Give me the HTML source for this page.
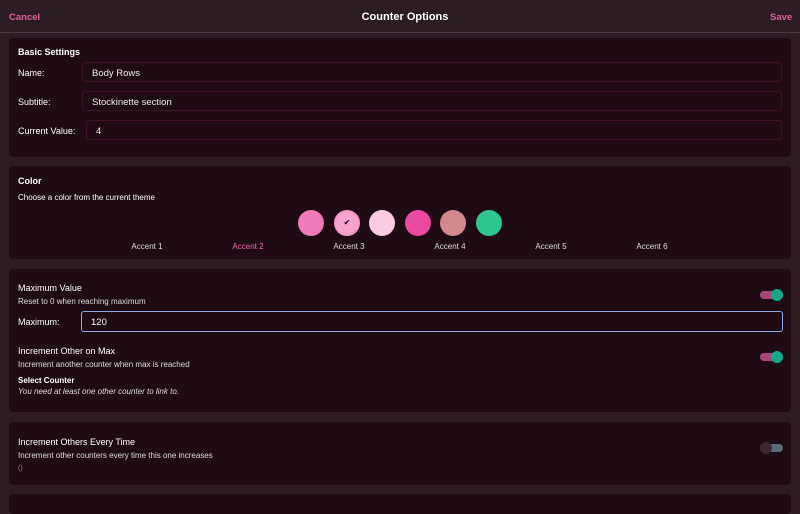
<!DOCTYPE html>
<html><head><style>
*{box-sizing:border-box;margin:0;padding:0}
body{width:800px;height:500px;overflow:hidden;background:#2b1d23;font-family:"Liberation Sans",sans-serif;color:#fff;position:relative}
.hdr{position:absolute;left:0;top:0;width:800px;height:33px;border-bottom:1px solid #4a3c44;background:#2b1d23}
.a{position:absolute;font-size:10px}
.card{position:absolute;left:9px;width:782px;background:#1f0b13;border-radius:4px}
.inp{position:absolute;height:20px;border:1px solid #3d1426;border-radius:3px;font-size:9.5px;padding:5px 9px;color:#eee}
.tg{position:absolute;width:23px;height:8px;border-radius:4px}
.tg i{position:absolute;top:-2px;width:12px;height:12px;border-radius:50%}
.c{position:absolute;top:210px;width:26px;height:26px;border-radius:50%}
</style></head><body>
<div class="hdr"></div>
<div class="a" style="left:9px;top:12px;color:#e0609f;font-weight:bold;font-size:9.5px">Cancel</div>
<div class="a" style="left:0;width:810px;text-align:center;top:11px;font-size:11px;font-weight:bold">Counter Options</div>
<div class="a" style="left:770px;top:12px;color:#e0609f;font-weight:bold;font-size:9.5px">Save</div>

<div class="card" style="top:38px;height:119px"></div>
<div class="a" style="left:18px;top:47px;font-weight:bold;font-size:9px">Basic Settings</div>
<div class="a" style="left:18px;top:68px;font-size:9px">Name:</div>
<div class="inp" style="left:82px;top:62px;width:700px">Body Rows</div>
<div class="a" style="left:18px;top:97px;font-size:9px">Subtitle:</div>
<div class="inp" style="left:82px;top:91px;width:700px">Stockinette section</div>
<div class="a" style="left:18px;top:126px;font-size:9px">Current Value:</div>
<div class="inp" style="left:86px;top:120px;width:696px">4</div>

<div class="card" style="top:166px;height:93px"></div>
<div class="a" style="left:18px;top:176px;font-weight:bold;font-size:9px">Color</div>
<div class="a" style="left:18px;top:193px;font-size:8px">Choose a color from the current theme</div>
<div class="c" style="left:298px;background:#f27ab9"></div>
<div class="c" style="left:334px;background:#f7a3cd;border:2px solid #f39ac8;font-size:8px;color:#000;text-align:center;line-height:22px">✔</div>
<div class="c" style="left:369px;background:#fbcbe4"></div>
<div class="c" style="left:405px;background:#ea4aa0"></div>
<div class="c" style="left:440px;background:#d3878e"></div>
<div class="c" style="left:476px;background:#2ec58f"></div>
<div class="a" style="left:117px;width:60px;text-align:center;top:242px;font-size:8px;color:#ddd">Accent 1</div>
<div class="a" style="left:218px;width:60px;text-align:center;top:242px;font-size:8px;color:#e86aa9">Accent 2</div>
<div class="a" style="left:319px;width:60px;text-align:center;top:242px;font-size:8px;color:#ddd">Accent 3</div>
<div class="a" style="left:420px;width:60px;text-align:center;top:242px;font-size:8px;color:#ddd">Accent 4</div>
<div class="a" style="left:521px;width:60px;text-align:center;top:242px;font-size:8px;color:#ddd">Accent 5</div>
<div class="a" style="left:622px;width:60px;text-align:center;top:242px;font-size:8px;color:#ddd">Accent 6</div>

<div class="card" style="top:269px;height:143px"></div>
<div class="a" style="left:18px;top:283px;font-size:9px">Maximum Value</div>
<div class="a" style="left:18px;top:297px;font-size:8px;color:#ddd">Reset to 0 when reaching maximum</div>
<div class="tg" style="left:760px;top:291px;background:#a64778"><i style="left:11px;background:#14a88a"></i></div>
<div class="a" style="left:18px;top:317px;font-size:9px">Maximum:</div>
<div class="inp" style="left:81px;top:311px;width:702px;height:21px;border:1.5px solid #8ea8e8;color:#fff">120</div>
<div class="a" style="left:18px;top:346px;font-size:9px">Increment Other on Max</div>
<div class="a" style="left:18px;top:360px;font-size:8px;color:#ddd">Increment another counter when max is reached</div>
<div class="tg" style="left:760px;top:353px;background:#a64778"><i style="left:11px;background:#14a88a"></i></div>
<div class="a" style="left:18px;top:376px;font-size:8px;font-weight:bold">Select Counter</div>
<div class="a" style="left:18px;top:387px;font-size:8px;font-style:italic;color:#ddd">You need at least one other counter to link to.</div>

<div class="card" style="top:422px;height:63px"></div>
<div class="a" style="left:18px;top:437px;font-size:9px">Increment Others Every Time</div>
<div class="a" style="left:18px;top:451px;font-size:8px;color:#ddd">Increment other counters every time this one increases</div>
<div class="a" style="left:18px;top:465px;font-size:7px;color:#888">()</div>
<div class="tg" style="left:760px;top:444px;background:#5a6878"><i style="left:0;background:#3a2a30"></i></div>

<div class="card" style="top:494px;height:20px"></div>
</body></html>
